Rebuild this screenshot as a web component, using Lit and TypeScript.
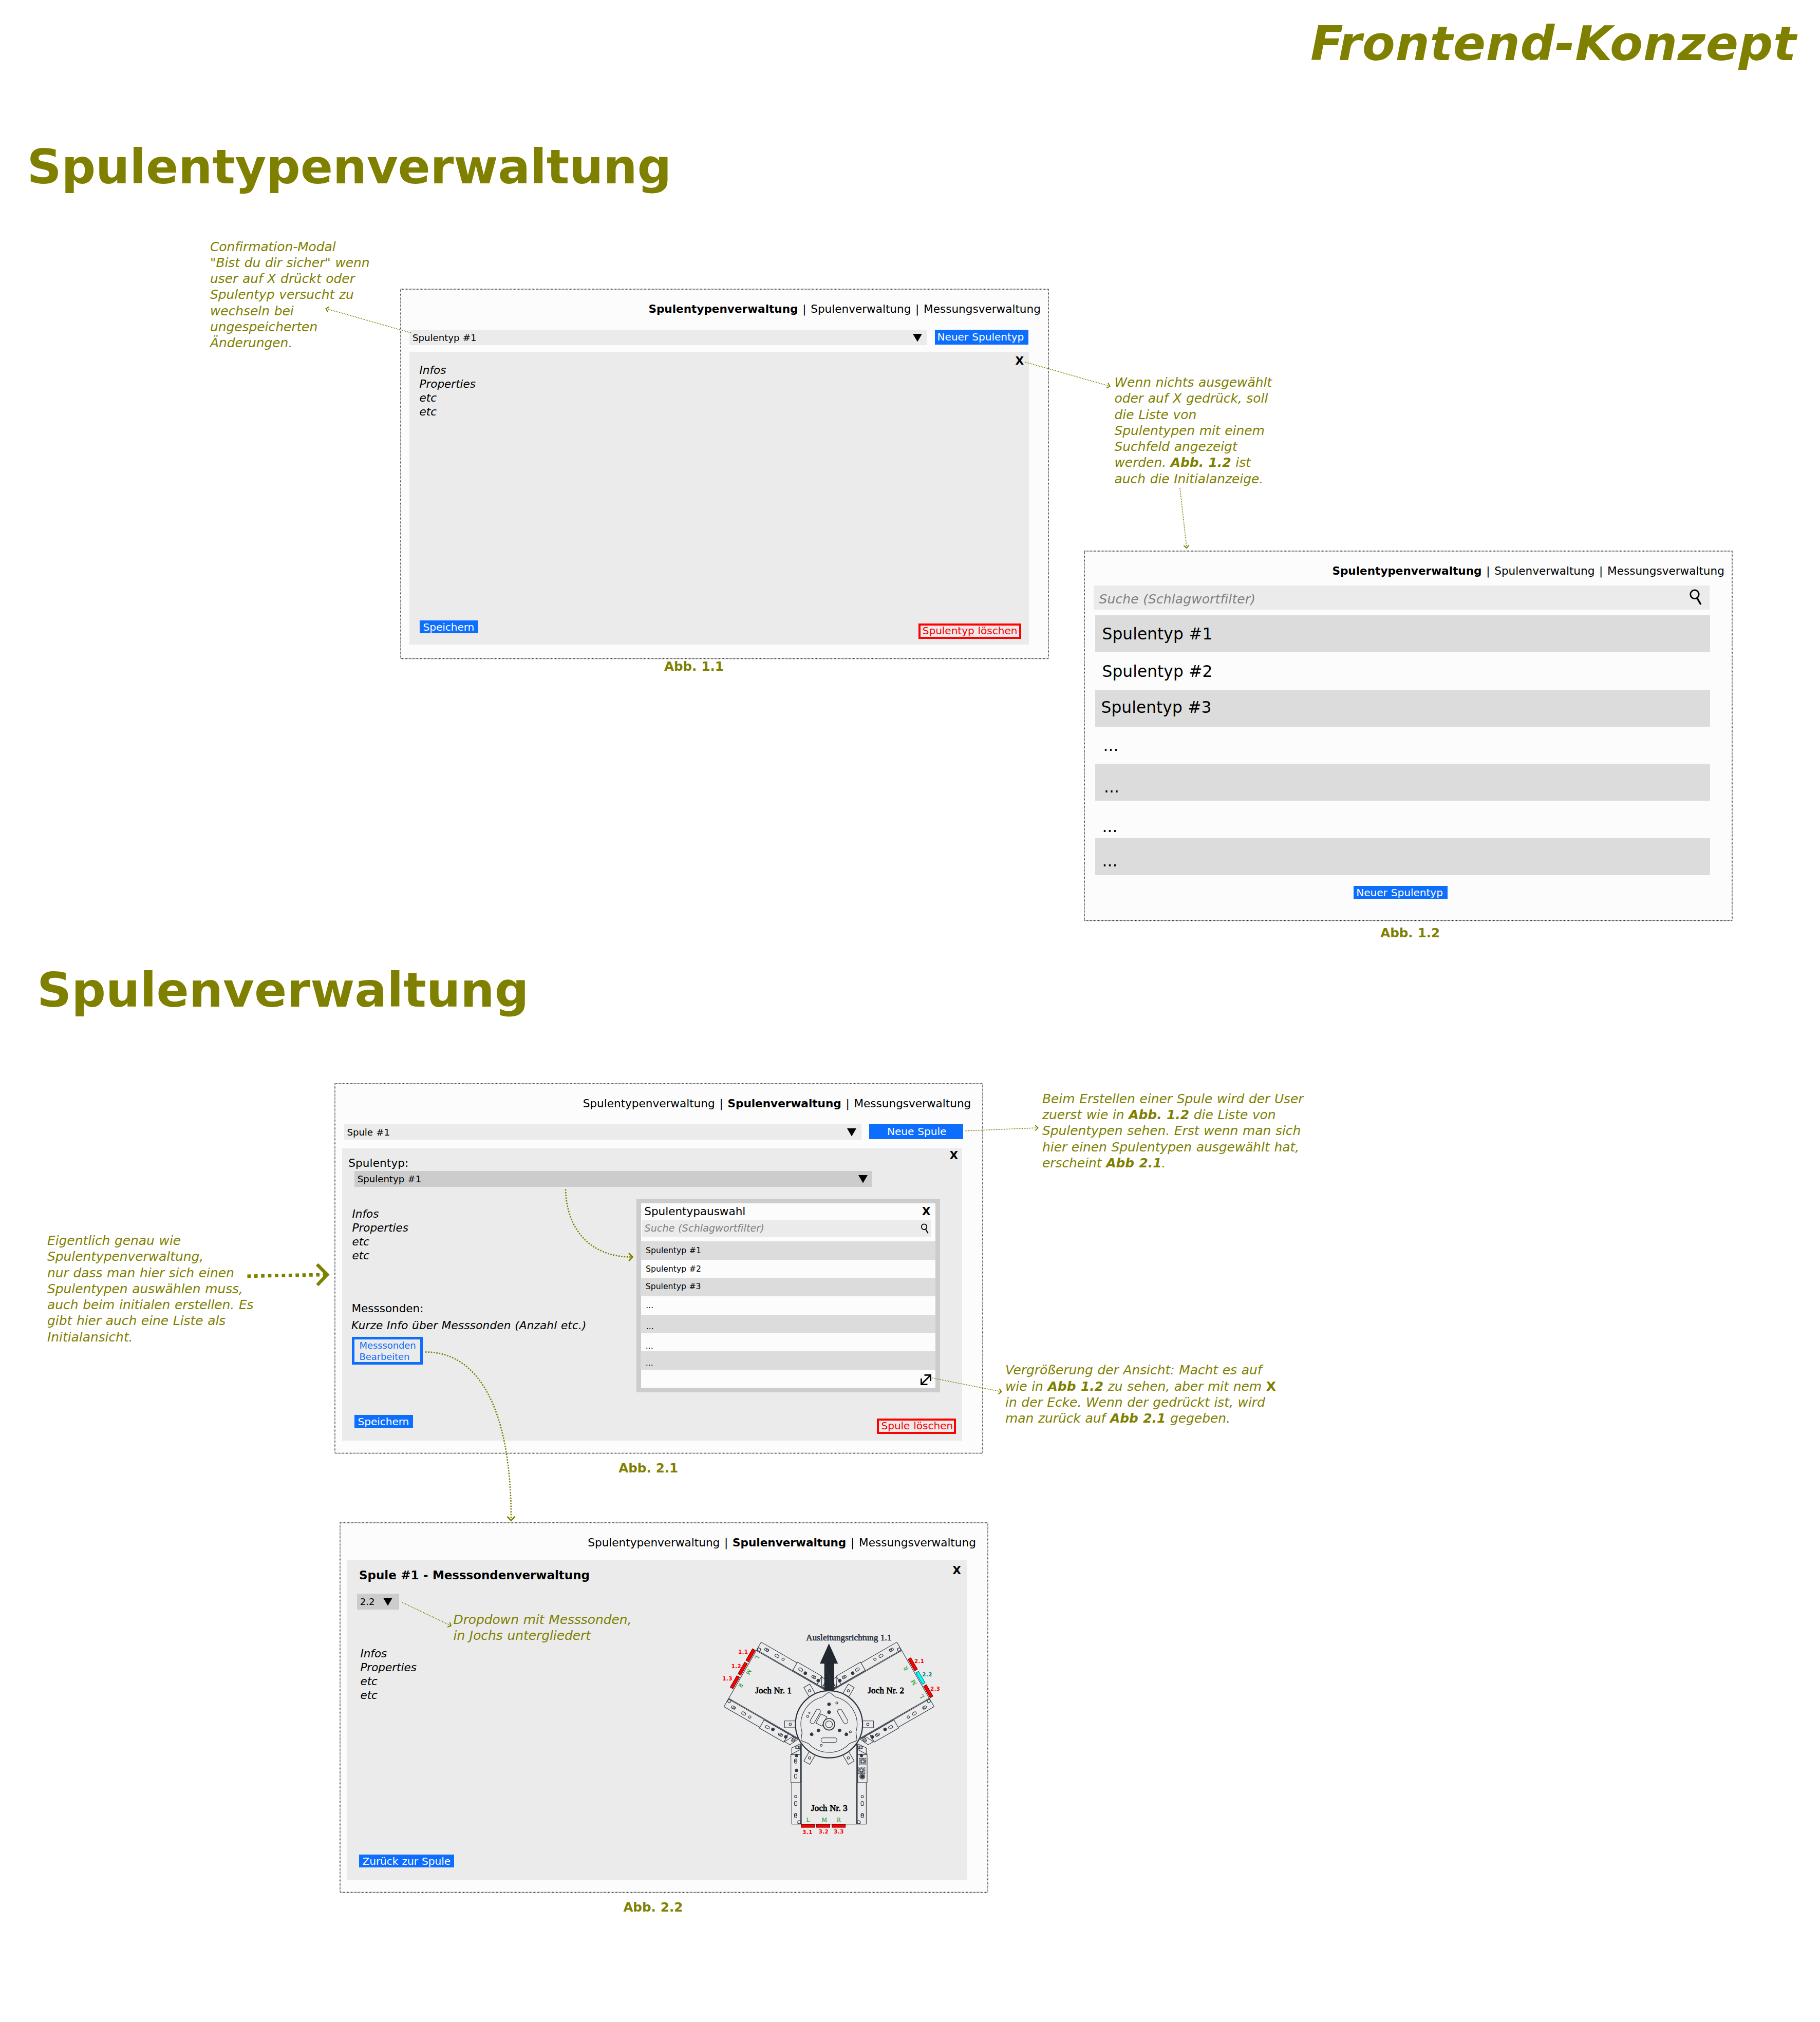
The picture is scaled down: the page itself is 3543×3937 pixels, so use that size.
import { LitElement, html, svg, css, nothing } from "lit";
import { customElement, property } from "lit/decorators.js";

/* ---------- shared text and control styles ---------- */

const base = css`
  * {
    box-sizing: border-box;
  }
  :host {
    display: block;
    font-family: "DejaVu Sans", Verdana, sans-serif;
    letter-spacing: -0.05px;
    word-spacing: 0.55px;
    white-space: nowrap;
    color: #000;
  }
  .btn {
    width: var(--w);
    height: 25px;
    padding-left: var(--pad, 6.5px);
    font-size: 20.2px;
    line-height: 26px;
    letter-spacing: -0.1px;
    word-spacing: 0.04em;
    color: #fff;
    background: #0d6efd;
  }
  .btn.tall {
    height: 29.4px;
    line-height: 28px;
  }
  .danger {
    width: var(--w);
    height: 30px;
    padding-left: 4px;
    border: 4.5px solid #f00;
    font-size: 20.2px;
    line-height: 21px;
    letter-spacing: -0.1px;
    color: #f00;
  }
  .infos {
    font-size: 21.6px;
    line-height: 27.1px;
    font-style: italic;
  }
  .close {
    font-size: 21.6px;
    line-height: 28px;
    font-weight: bold;
  }
`;

const magnifier = (w: number, h: number) => svg`
  <svg class="lens" width=${w} height=${h} viewBox="0 0 26 32" fill="none" stroke="#000" stroke-width="2.8">
    <ellipse cx="11" cy="10.3" rx="8.2" ry="8.4" />
    <path d="M15.6 17.4 L23 30" stroke-width="3.4" />
  </svg>`;

const infoLines = html`<div>Infos</div><div>Properties</div><div>etc</div><div>etc</div>`;

/* ---------- dropdown ---------- */

@customElement("drop-down")
class DropDown extends LitElement {
  @property() label = "";
  static styles = [
    base,
    css`
      :host {
        display: flex;
        justify-content: space-between;
        height: 30.4px;
        padding: 0 9.8px 0 5.8px;
        font-size: 18.2px;
        line-height: 31px;
        background: #ebebeb;
      }
      :host([dark]) {
        padding-right: 7.8px;
        background: #ccc;
      }
      :host([small]) {
        padding-right: 12.5px;
      }
      .caret {
        margin-top: 8px;
        flex: none;
      }
    `,
  ];
  render() {
    return html`<span>${this.label}</span>
      <svg class="caret" width="18" height="15.5" viewBox="0 0 18 15.5"><path d="M0 0H18L9 15.5Z" /></svg>`;
  }
}

/* ---------- list of coil types ---------- */

type Row = { label: string; indent: number; line: number };

@customElement("type-list")
class TypeList extends LitElement {
  @property({ attribute: false }) rows: Row[] = [];
  static styles = [
    base,
    css`
      .row {
        height: var(--row-height);
        font-size: var(--row-font);
        letter-spacing: 0.003em;
      }
      .row:nth-child(odd) {
        background: #dcdcdc;
      }
    `,
  ];
  render() {
    return this.rows.map(
      (r) => html`<div class="row" style="padding-left:${r.indent}px;line-height:${r.line}px">${r.label}</div>`
    );
  }
}

/* ---------- frame with dotted outline, navigation and caption ---------- */

const TABS = ["Spulentypenverwaltung", "Spulenverwaltung", "Messungsverwaltung"];

@customElement("mock-frame")
class MockFrame extends LitElement {
  @property({ type: Number }) active = 0;
  @property() caption = "";
  static styles = [
    base,
    css`
      :host {
        position: absolute;
        width: 1261px;
      }
      .frame {
        position: relative;
        display: flex;
        flex-direction: column;
        height: 720px;
        background: #fcfcfc;
      }
      .outline {
        position: absolute;
        inset: 0;
        overflow: visible;
      }
      .nav {
        margin-top: 25px;
        padding-left: 482.4px;
        font-size: 21.6px;
        line-height: 28px;
        letter-spacing: -0.02px;
        word-spacing: 0.088em;
      }
      .caption {
        margin: var(--cap-gap) 0 0 var(--cap-left);
        font-size: 24.6px;
        line-height: 29px;
        font-weight: bold;
        color: #808000;
      }
    `,
  ];
  render() {
    return html`
      <div class="frame">
        <div class="nav">
          ${TABS.map((t, i) => html`${i ? " | " : nothing}${i === this.active ? html`<b>${t}</b>` : t}`)}
        </div>
        <slot></slot>
        <svg class="outline" width="1261" height="720">
          <rect width="1261" height="719.5" fill="none" stroke="#000" stroke-width="1.35" stroke-dasharray="1.33 1.33" />
        </svg>
      </div>
      <div class="caption">${this.caption}</div>
    `;
  }
}

/* ---------- coil type picker popup ---------- */

@customElement("type-picker")
class TypePicker extends LitElement {
  static rows: Row[] = [
    { label: "Spulentyp #1", indent: 10.3, line: 36.2 },
    { label: "Spulentyp #2", indent: 10.3, line: 37.2 },
    { label: "Spulentyp #3", indent: 10, line: 35 },
    { label: "...", indent: 10.5, line: 36.4 },
    { label: "...", indent: 11, line: 46 },
    { label: "...", indent: 10, line: 51.4 },
    { label: "...", indent: 10, line: 47 },
  ];
  static styles = [
    base,
    css`
      :host {
        display: flex;
        flex-direction: column;
        width: 591px;
        height: 377.4px;
        border: 9.3px solid #ccc;
        background: #fcfcfc;
      }
      .head {
        display: flex;
        justify-content: space-between;
        height: 33.6px;
        padding: 2.7px 9.5px 0 6.5px;
        font-size: 21.6px;
        line-height: 28px;
      }
      .search {
        display: flex;
        justify-content: space-between;
        width: 562.6px;
        height: 31.6px;
        margin-left: 2.2px;
        padding: 0 4px 0 4.6px;
        font-size: 19.1px;
        line-height: 32px;
        letter-spacing: 0.005em;
        font-style: italic;
        color: #808080;
        background: #ebebeb;
      }
      .lens {
        margin-top: 6.3px;
      }
      type-list {
        margin: 9.2px 0 0 -1px;
        --row-height: 35.75px;
        --row-font: 15.6px;
      }
      .foot {
        display: flex;
        justify-content: flex-end;
        padding: 8px 7px 0 0;
      }
    `,
  ];
  render() {
    return html`
      <div class="head"><span>Spulentypauswahl</span><span class="close">X</span></div>
      <div class="search"><span>Suche (Schlagwortfilter)</span>${magnifier(16.6, 20.6)}</div>
      <type-list .rows=${TypePicker.rows}></type-list>
      <div class="foot">
        <svg width="23" height="23" viewBox="0 0 23 23" fill="none" stroke="#000" stroke-width="2.8">
          <path d="M8.5 2.4H20.6V14M2.4 9V20.6H14.5M2.4 20.6L20.6 2.4" />
        </svg>
      </div>
    `;
  }
}

/* ---------- yoke diagram ---------- */

const INK = "#29313c";

const bolt = (x: number, y: number, r = 8.5) => svg`
  <circle cx=${x} cy=${y} r=${r} fill="#4a515b" />
  <circle cx=${x} cy=${y} r=${r * 0.4} fill="#1d242d" />`;

const slot = (x: number, y: number) => svg`<rect x=${x - 7.5} y=${y - 12.5} width="15" height="25" rx="7.5" />`;

const beam = (plain: boolean) => svg`
  <path d="M484 993V1235M536 770V1235M540.5 745V1235" />
  <path d="M538 775V993" stroke-width="6" stroke="#5b626b" />
  <rect x="479" y="829" width="55" height="164" />
  <path d="M479 829L535 799M484 825V790L535 766V829" />
  <path d="M507 779H531V794H507ZM514 776V798M523 776V798" />
  <circle cx="507" cy="1074" r="7" />
  ${slot(507, 1115)}${slot(507, 1185)}
  <circle cx="507" cy="1181" r="6" />
  <circle cx="528" cy="1224" r="9" />
  <path d="M519 1235V1216H540" stroke-width="2" />
  ${bolt(512, 834)}
  ${plain
    ? svg`${slot(507, 867)}${slot(507, 955)}<path d="M504 860V873M510 860V873" />${bolt(512, 921)}`
    : svg`
      <rect x="486" y="850" width="39" height="39" /><circle cx="505" cy="869" r="15" /><circle cx="505" cy="869" r="9" stroke-width="4" />
      <rect x="492" y="902" width="39" height="39" /><circle cx="512" cy="921" r="15" /><circle cx="512" cy="921" r="9" stroke-width="4" />
      <circle cx="507" cy="957" r="15" />${bolt(507, 957, 10)}`}`;

const yoke = (angle: number, plainRight: boolean) => svg`
  <g transform="rotate(${angle} 701.5 652)">
    <path d="M483 1235H920" />
    ${beam(true)}
    <g transform="translate(1403 0) scale(-1 1)">${beam(plainRight)}</g>
  </g>`;

type Probe = { x: number; y: number; angle: number; label: string; tx: number; ty: number; on?: boolean };

const PROBES: Probe[] = [
  { x: 243.5, y: 249, angle: 120, label: "1.1", tx: 171, ty: 240 },
  { x: 197.5, y: 327.5, angle: 120, label: "1.2", tx: 131, ty: 324 },
  { x: 152, y: 406, angle: 120, label: "1.3", tx: 79, ty: 397 },
  { x: 1190.5, y: 301.5, angle: 60, label: "2.1", tx: 1200, ty: 294 },
  { x: 1235.5, y: 380.5, angle: 60, label: "2.2", tx: 1246, ty: 373, on: true },
  { x: 1281, y: 459, angle: 60, label: "2.3", tx: 1293, ty: 456 },
  { x: 577.5, y: 1245, angle: 0, label: "3.1", tx: 547, ty: 1293 },
  { x: 667.5, y: 1245, angle: 0, label: "3.2", tx: 641, ty: 1291 },
  { x: 758, y: 1245, angle: 0, label: "3.3", tx: 730, ty: 1291 },
];

const LETTERS: [string, number, number, number][] = [
  ["L", 281, 263, 120],
  ["M", 233, 347, 120],
  ["R", 186, 426, 120],
  ["R", 1149, 326, -120],
  ["M", 1195, 408, -120],
  ["L", 1243, 489, -120],
  ["L", 580, 1209, 0],
  ["M", 674, 1209, 0],
  ["R", 759, 1209, 0],
];

@customElement("yoke-diagram")
class YokeDiagram extends LitElement {
  static styles = css`
    :host {
      display: block;
      width: 470px;
      height: 460px;
      letter-spacing: 0;
      word-spacing: 0;
    }
    .serif {
      font-family: "Liberation Serif", "Times New Roman", serif;
      font-size: 50.6px;
    }
    .letter {
      font-family: "Liberation Serif", "Times New Roman", serif;
      font-size: 35px;
      fill: #1f9a2f;
      stroke: #1f9a2f;
      stroke-width: 0.6px;
      text-anchor: middle;
    }
    .probe {
      font-family: "DejaVu Sans", Verdana, sans-serif;
      font-size: 31px;
      font-weight: bold;
      fill: #f00;
    }
    .on {
      fill: #008080;
    }
  `;
  render() {
    return html`<svg width="470" height="460" viewBox="0 0 1410 1380">
      <g fill="none" stroke=${INK} stroke-width="3.2">
        ${yoke(120, true)}${yoke(-120, true)}${yoke(0, false)}
        ${[0, 60, 120, 180, 240, 300].map(
          (a) => svg`<g transform="rotate(${a} 701.5 652)"><path d="M897 632H961V672H897" /><circle cx="928" cy="652" r="7" /></g>`
        )}
        <circle cx="701.5" cy="652" r="196" stroke-width="6.5" fill="#ebebeb" />
        ${[0, 120, 240].map(
          (a) => svg`<g transform="rotate(${a} 701.5 652)">
            <path d="M663 492.500L701.500 463L740 492.500A164 164 0 0 1 859 698" />
            <rect x="655" y="731" width="93" height="27" rx="13.5" />
            ${bolt(701.5, 535)}${bolt(701.5, 581)}
          </g>`
        )}
        <circle cx="747" cy="527" r="6" /><circle cx="587" cy="585" r="4" /><circle cx="577" cy="606" r="6" />
        <circle cx="826" cy="696" r="6" /><circle cx="656" cy="775" r="6" />
        <path d="M654 592L689 608L661 663L625 645Z" fill="#ebebeb" />
        <circle cx="701.5" cy="652" r="34" stroke-width="5" fill="#ebebeb" /><circle cx="701.5" cy="652" r="20" />
      </g>
      <path d="M701 180L754 298H731V455H674V298H648Z" fill="#212830" />
      <path d="M676 304L729 448" stroke="#454c55" stroke-width="1.500" />
      <text class="serif" x="568" y="161" fill=${INK} stroke=${INK} stroke-width="2" textLength="498">Ausleitungsrichtung 1.1</text>
      <g class="serif" stroke="#000" stroke-width="2.4">
        <text x="271" y="471" textLength="212">Joch Nr. 1</text>
        <text x="928" y="471" textLength="212">Joch Nr. 2</text>
        <text x="597" y="1157" textLength="212">Joch Nr. 3</text>
      </g>
      ${LETTERS.map(
        ([l, x, y, a]) => svg`<text class="letter" transform="translate(${x} ${y}) rotate(${a})" y="12">${l}</text>`
      )}
      ${PROBES.map(
        (p) => svg`
          <rect x="-38.500" y="-9" width="77" height="18" transform="translate(${p.x} ${p.y}) rotate(${p.angle})"
            fill=${p.on ? "#00ffff" : "#ff0000"} stroke=${p.on ? "#007d7d" : "#7d0000"} stroke-width="3.5" />
          <text class="probe ${p.on ? "on" : ""}" x=${p.tx} y=${p.ty} textLength="57">${p.label}</text>`
      )}
    </svg>`;
  }
}

/* ---------- arrows between notes and frames ---------- */

type Arrow = { d: string; tip: [number, number]; angle: number; bold?: boolean };

const ARROWS: Arrow[] = [
  { d: "M800 648L637 601.500", tip: [634.5, 600.8], angle: 196 },
  { d: "M1995.500 705L2159 751.500", tip: [2160.5, 752], angle: 16 },
  { d: "M2297 950L2310 1066", tip: [2310, 1067], angle: 84 },
  { d: "M1878 2202L2019 2196", tip: [2020.5, 2196], angle: -2 },
  { d: "M1814.600 2683L1948 2709.500", tip: [1949.5, 2710], angle: 11 },
  { d: "M783 3120L877 3165", tip: [878, 3165.5], angle: 25 },
  { d: "M1101 2315.500C1103 2395 1150 2447 1229 2447.500", tip: [1231.5, 2447.5], angle: 0, bold: true },
  { d: "M828 2632.500C930 2632 995 2740 995 2958", tip: [995, 2960.5], angle: 90, bold: true },
];

/* ---------- poster ---------- */

@customElement("app-root")
class AppRoot extends LitElement {
  static rows: Row[] = [
    { label: "Spulentyp #1", indent: 13.5, line: 73.6 },
    { label: "Spulentyp #2", indent: 13.5, line: 75.8 },
    { label: "Spulentyp #3", indent: 11.5, line: 69.2 },
    { label: "...", indent: 15.5, line: 72.6 },
    { label: "...", indent: 17, line: 91.2 },
    { label: "...", indent: 13.5, line: 100.4 },
    { label: "...", indent: 13.5, line: 89.8 },
  ];
  static styles = [
    base,
    css`
      :host {
        position: relative;
        width: 3543px;
        height: 3937px;
        overflow: hidden;
        background: #fff;
      }
      .title,
      .heading {
        position: absolute;
        font-size: 93.3px;
        line-height: 110px;
        font-weight: bold;
        letter-spacing: -0.0025em;
        color: #808000;
      }
      .title {
        left: 2551px;
        top: 29.7px;
        font-style: italic;
        letter-spacing: 0.0065em;
      }
      .h1 {
        left: 52.5px;
        top: 270px;
      }
      .h2 {
        left: 72px;
        top: 1872.5px;
        letter-spacing: 0;
      }
      .note {
        position: absolute;
        font-size: 24.95px;
        line-height: 31.25px;
        word-spacing: 0.034em;
        font-style: italic;
        color: #808000;
      }
      .upright {
        font-style: normal;
      }
      .n1 { left: 409px; top: 464.7px; }
      .n2 { left: 2169.5px; top: 729.2px; }
      .n3 { left: 2029px; top: 2123.8px; }
      .n4 { left: 1957px; top: 2652.3px; }
      .n5 { left: 92px; top: 2400.2px; }
      .n6 { left: 882.5px; top: 3138.2px; }

      .f11 { left: 780px; top: 563px; --cap-gap: 0px; --cap-left: 513px; }
      .f12 { left: 2111px; top: 1073px; --cap-gap: 8.7px; --cap-left: 576.2px; }
      .f21 { left: 652.3px; top: 2110.3px; --cap-gap: 13.5px; --cap-left: 552px; }
      .f22 { left: 661.9px; top: 2965.4px; --cap-gap: 13.7px; --cap-left: 551.5px; }

      .bar {
        display: flex;
        gap: 15.3px;
        margin: 25.7px 0 0 17.3px;
      }
      .bar drop-down {
        width: 1007.5px;
      }
      .panel {
        position: relative;
        display: flex;
        flex-direction: column;
        width: 1206.5px;
        background: #ebebeb;
      }
      .top {
        display: flex;
        justify-content: space-between;
        align-items: flex-start;
      }
      .foot {
        display: flex;
        justify-content: space-between;
        align-items: flex-end;
        margin-top: auto;
      }
      .p11 { height: 569.7px; margin: 13.2px 0 0 16.5px; }
      .p11 .top { padding: 4.2px 10px 0 20px; }
      .p11 .infos { margin-top: 17.5px; }
      .p11 .foot { padding: 0 15.3px 11px 20.5px; }
      .p11 .btn { margin-bottom: 11px; }

      .search {
        display: flex;
        justify-content: space-between;
        width: 1199px;
        height: 47.5px;
        margin: 13.5px 0 0 18px;
        padding: 0 14px 0 10.5px;
        font-size: 24.95px;
        line-height: 53.500px;
        letter-spacing: 0.005em;
        font-style: italic;
        color: #808080;
        background: #ebebeb;
      }
      .lens {
        margin-top: 7.5px;
      }
      .list {
        width: 1197px;
        margin: 11px 0 20.6px 21px;
        --row-height: 72.3px;
        --row-font: 31.2px;
      }
      .below {
        margin-left: 523.7px;
      }

      .p21 { height: 568.5px; margin: 17.1px 0 0 14.2px; }
      .p21 .top { height: 44px; padding: 0 8px 0 11.7px; }
      .label {
        font-size: 21.6px;
        line-height: 28px;
      }
      .p21 .top .label { margin-top: 15px; letter-spacing: 0.1px; }
      .inner-drop { width: 1007.3px; margin-left: 23.5px; }
      .inner-drop[dark] { flex: none; }
      .p21 .infos { margin: 38.8px 0 0 19px; }
      .probes { margin: 75.8px 0 0 18px; }
      .summary {
        margin: 5.4px 0 0 17.5px;
        font-style: italic;
        letter-spacing: 0.007em;
      }
      .edit {
        width: 137.5px;
        height: 54.8px;
        margin: 7.3px 0 0 19px;
        padding: 1px 0 0 9px;
        border: 5px solid #0d6efd;
        font-size: 18px;
        line-height: 22.4px;
        letter-spacing: -0.1px;
        color: #0d6efd;
      }
      .picker {
        position: absolute;
        left: 572.3px;
        top: 97.1px;
      }
      .p21 .foot { padding: 0 12px 13.3px 23.5px; }
      .p21 .btn { margin-bottom: 11.2px; }

      .p22 { height: 622px; margin: 19.5px 0 0 13.5px; }
      .p22 .top { padding: 0 11px 0 23.7px; }
      .sub {
        margin-top: 14.7px;
        font-size: 23px;
        line-height: 28px;
        font-weight: bold;
      }
      .probe-drop { width: 81.6px; margin: 22.8px 0 0 19.6px; }
      .p22 .infos { margin: 72px 0 0 26px; }
      .p22 .close { margin-top: 6px; }
      .p22 .foot { padding: 0 0 24px 23.6px; }
      .diagram {
        position: absolute;
        left: 704.6px;
        top: 102px;
      }
      .links {
        position: absolute;
        left: 0;
        top: 0;
      }
    `,
  ];

  render() {
    return html`
      <div class="title">Frontend-Konzept</div>
      <div class="heading h1">Spulentypenverwaltung</div>
      <div class="heading h2">Spulenverwaltung</div>

      <mock-frame class="f11" active="0" caption="Abb. 1.1">
        <div class="bar">
          <drop-down label="Spulentyp #1"></drop-down>
          <div class="btn tall" style="--w:182px;--pad:4.5px">Neuer Spulentyp</div>
        </div>
        <div class="panel p11">
          <div class="top"><div class="infos">${infoLines}</div><span class="close">X</span></div>
          <div class="foot">
            <div class="btn" style="--w:114px">Speichern</div>
            <div class="danger" style="--w:200px">Spulentyp löschen</div>
          </div>
        </div>
      </mock-frame>

      <mock-frame class="f12" active="0" caption="Abb. 1.2">
        <div class="search"><span>Suche (Schlagwortfilter)</span>${magnifier(26, 32)}</div>
        <type-list class="list" .rows=${AppRoot.rows}></type-list>
        <div class="btn below" style="--w:183px;--pad:5.5px">Neuer Spulentyp</div>
      </mock-frame>

      <mock-frame class="f21" active="1" caption="Abb. 2.1">
        <div class="bar">
          <drop-down label="Spule #1"></drop-down>
          <div class="btn tall" style="--w:182.500px;--pad:34.5px">Neue Spule</div>
        </div>
        <div class="panel p21">
          <div class="top"><span class="label">Spulentyp:</span><span class="close">X</span></div>
          <drop-down class="inner-drop" dark label="Spulentyp #1"></drop-down>
          <div class="infos">${infoLines}</div>
          <div class="label probes">Messsonden:</div>
          <div class="label summary">Kurze Info über Messsonden (Anzahl etc.)</div>
          <div class="edit"><div>Messsonden</div><div>Bearbeiten</div></div>
          <div class="foot">
            <div class="btn" style="--w:114.400px">Speichern</div>
            <div class="danger" style="--w:153.500px">Spule löschen</div>
          </div>
          <type-picker class="picker"></type-picker>
        </div>
      </mock-frame>

      <mock-frame class="f22" active="1" caption="Abb. 2.2">
        <div class="panel p22">
          <div class="top"><div class="sub">Spule #1 - Messsondenverwaltung</div><span class="close">X</span></div>
          <drop-down class="probe-drop" dark small label="2.2"></drop-down>
          <div class="infos">${infoLines}</div>
          <div class="foot"><div class="btn" style="--w:185px">Zurück zur Spule</div></div>
          <yoke-diagram class="diagram"></yoke-diagram>
        </div>
      </mock-frame>

      <svg class="links" width="3543" height="3937" fill="none" stroke="#808000">
        ${ARROWS.map((a) => {
          const s = a.bold ? 7.4 : 5.2;
          return svg`
            <path d=${a.d} stroke-width=${a.bold ? 2.67 : 1.6} stroke-dasharray=${a.bold ? "2.67 2.67" : "1.6 1.6"} />
            <path d="M${-s} ${-s}L0 0L${-s} ${s}" transform="translate(${a.tip[0]} ${a.tip[1]}) rotate(${a.angle})"
              stroke-width=${a.bold ? 2.8 : 2} />`;
        })}
        <path d="M481.500 2484.800L630 2481.900" stroke-width="6.700" stroke-dasharray="6.700 6.700" />
        <path d="M619.700 2459.700L641.500 2481.700L620 2504.300L615.300 2500L628.700 2485.700V2478.300L614.700 2464Z" fill="#808000" stroke="none" />
      </svg>

      <div class="note n1">Confirmation-Modal<br />"Bist du dir sicher" wenn<br />user auf X drückt oder<br />Spulentyp versucht zu<br />wechseln bei<br />ungespeicherten<br />Änderungen.</div>
      <div class="note n2">Wenn nichts ausgewählt<br />oder auf X gedrück, soll<br />die Liste von<br />Spulentypen mit einem<br />Suchfeld angezeigt<br />werden. <b>Abb. 1.2</b> ist<br />auch die Initialanzeige.</div>
      <div class="note n3">Beim Erstellen einer Spule wird der User<br />zuerst wie in <b>Abb. 1.2</b> die Liste von<br />Spulentypen sehen. Erst wenn man sich<br />hier einen Spulentypen ausgewählt hat,<br />erscheint <b>Abb 2.1</b>.</div>
      <div class="note n4">Vergrößerung der Ansicht: Macht es auf<br />wie in <b>Abb 1.2</b> zu sehen, aber mit nem <b class="upright">X</b><br />in der Ecke. Wenn der gedrückt ist, wird<br />man zurück auf <b>Abb 2.1</b> gegeben.</div>
      <div class="note n5">Eigentlich genau wie<br />Spulentypenverwaltung,<br />nur dass man hier sich einen<br />Spulentypen auswählen muss,<br />auch beim initialen erstellen. Es<br />gibt hier auch eine Liste als<br />Initialansicht.</div>
      <div class="note n6">Dropdown mit Messsonden,<br />in Jochs untergliedert</div>
    `;
  }
}
